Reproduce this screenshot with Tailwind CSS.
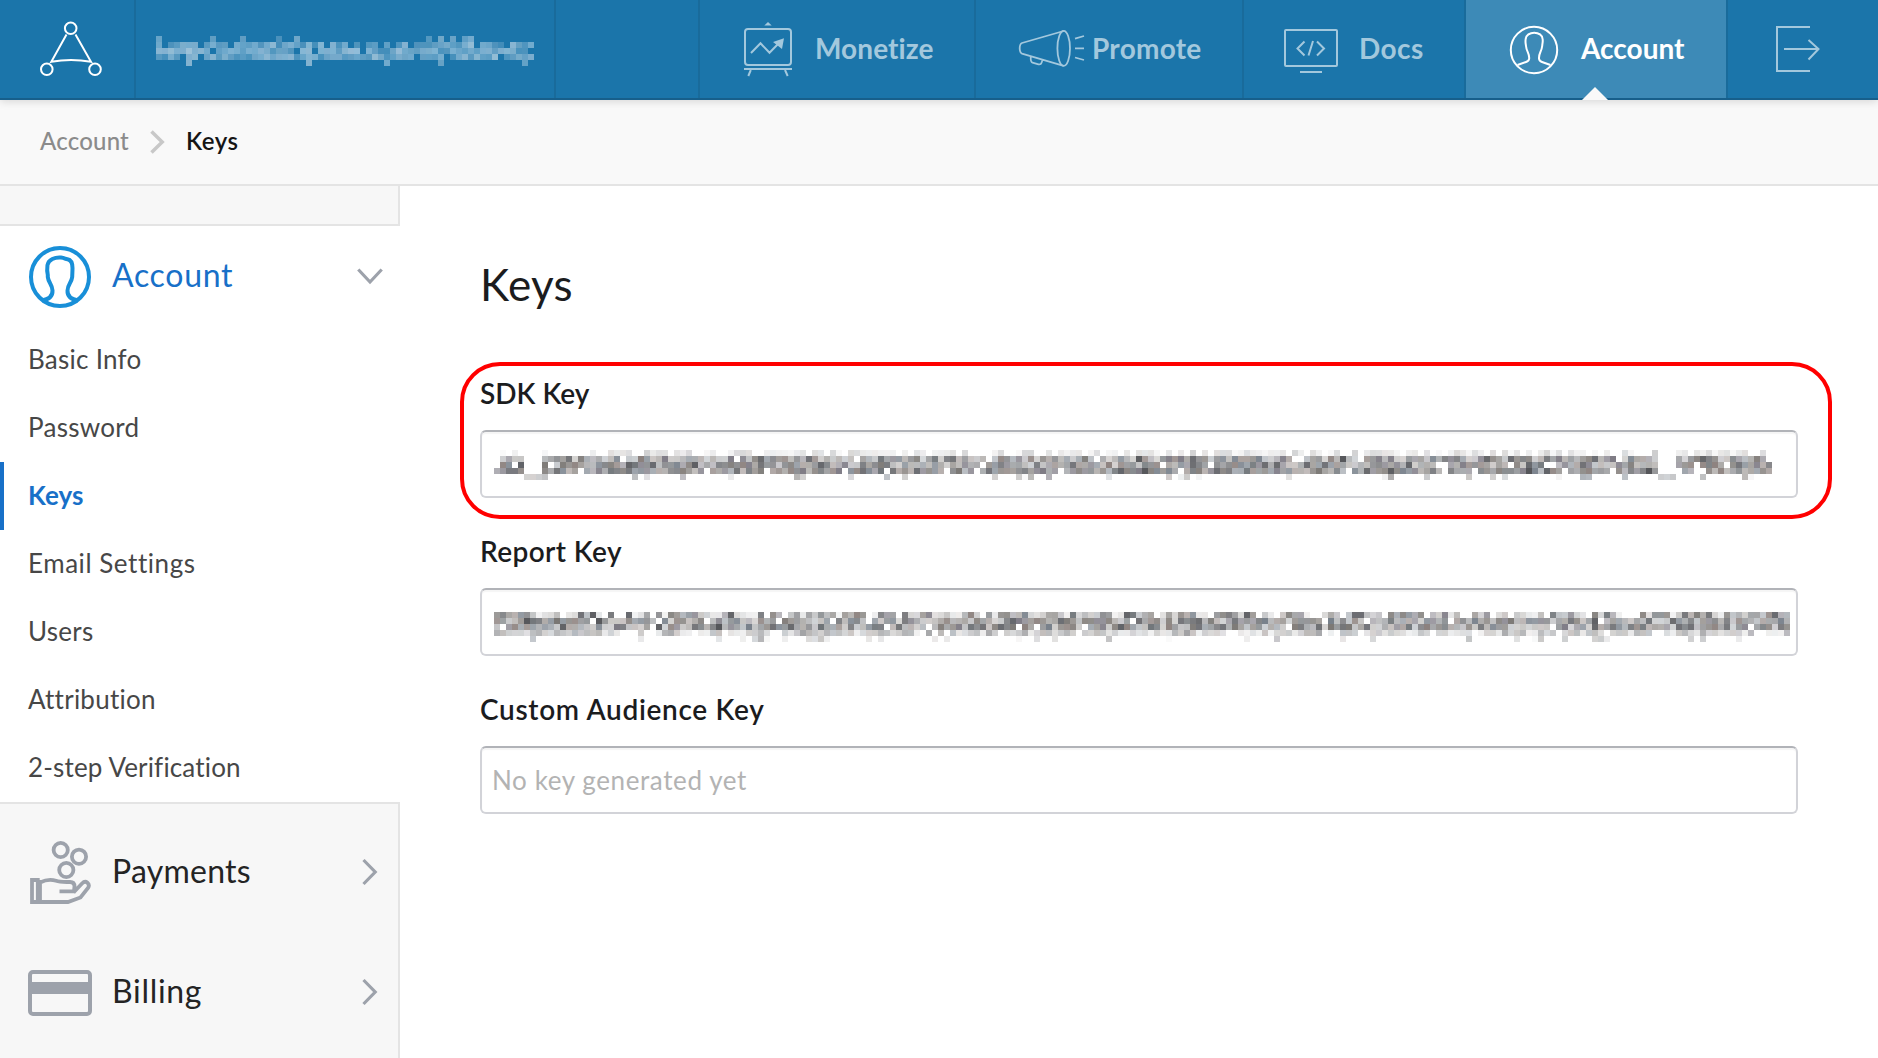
<!DOCTYPE html>
<html lang="en">
<head>
<meta charset="utf-8">
<title>Keys</title>
<script src="https://cdn.jsdelivr.net/npm/@tailwindcss/browser@4"></script>
</head>
<body class="flex h-[1058px] w-[1878px] flex-col overflow-hidden bg-white font-['Lato','Open_Sans',sans-serif] text-[#1b1c1e]">

<header class="relative z-10 flex h-[100px] shrink-0 border-b-2 border-[#175f8b] bg-[#1b75aa] text-[28px] font-bold text-[#a3c8dd] shadow-[0_2px_8px_rgba(0,0,0,0.13)]">
  <a class="w-[136px] border-r-2 border-[#196b9b] pl-[38px]">
    <svg class="h-[98px] w-[68px] text-white" viewBox="38 0 68 98" fill="none" stroke="currentColor" stroke-width="2">
      <circle cx="70.7" cy="28.3" r="5.8"/><circle cx="46.8" cy="69.3" r="5.8"/><circle cx="95" cy="69.3" r="5.8"/>
      <path d="M66.5 34.5L51.3 61.8Q71 58 91 61.8L75.5 34.5"/>
    </svg>
  </a>
  <div class="w-[420px] border-r-2 border-[#196b9b] pt-9 pl-5">
    <svg id="mask-email" class="h-[30px] w-[380px]" shape-rendering="crispEdges"></svg>
  </div>
  <div class="w-36 border-r-2 border-[#196b9b]"></div>
  <a class="flex w-[276px] items-center gap-[22px] border-r-2 border-[#196b9b] pl-[43px]">
    <svg class="h-[98px] w-[50px]" viewBox="743 0 50 98" fill="none" stroke="currentColor" stroke-width="2">
      <rect x="745" y="29" width="46" height="36" rx="3"/>
      <path d="M744 69H792M750.8 70L748.3 76M785 70L787.7 76M751 53L760.5 43.3L769.5 52.8L779 43"/>
      <path d="M764.3 25.5L768 22L771.7 25.5ZM784 38.2L773 42L782 49Z" fill="currentColor" stroke="none"/>
    </svg>
    <span class="pb-0.5 tracking-[0.09px]">Monetize</span>
  </a>
  <a class="flex w-[268px] items-center gap-1.5 border-r-2 border-[#196b9b] pl-[42px]">
    <svg class="h-[98px] w-[68px]" viewBox="1018 0 68 98" fill="none" stroke="currentColor" stroke-width="1.8">
      <ellipse cx="1063.7" cy="48.4" rx="6.3" ry="17.5"/>
      <path d="M1063.7 31L1022 43Q1019.7 44 1019.7 48.300T1022 53.600L1063.700 65.900M1030.800 56.600Q1030.300 62 1032.500 62.600L1038.500 64.300Q1041.800 65 1042.300 60M1075 38.600L1084 36M1075 48.300H1084M1075 57.500L1084 60"/>
    </svg>
    <span class="pb-0.5 tracking-[0.25px]">Promote</span>
  </a>
  <a class="flex w-[222px] items-center gap-5 border-r-2 border-[#196b9b] pl-[39px]">
    <svg class="h-[98px] w-14" viewBox="1283 0 56 98" fill="none" stroke="currentColor" stroke-width="2">
      <rect x="1285" y="30" width="52" height="36" rx="1"/>
      <path d="M1300 72H1322M1304.500 41.500L1297.500 48.500L1304.500 55.500M1317 41.500L1324 48.500L1317 55.500M1313 41L1308.500 55.500"/>
    </svg>
    <span class="pb-0.5 tracking-[0.44px]">Docs</span>
  </a>
  <a class="relative flex w-[262px] items-center gap-[22px] border-r-2 border-[#196b9b] bg-[#3d8ab7] pl-[43px] text-white">
    <svg class="h-[98px] w-[50px]" viewBox="1509 0 50 98" fill="none" stroke="currentColor" stroke-width="2">
      <circle cx="1534" cy="50" r="23.2"/>
      <path d="M1517.500 65L1526 62Q1529 61 1529.200 58.500C1529.500 53 1526.500 52 1526 46C1525.500 42 1525.300 43 1525.600 39.500C1526 30.500 1542.500 30.500 1542.700 39.500C1542.900 43 1542.500 42 1542.200 46C1541.500 52 1538.700 53 1539 58.500Q1539.200 61 1542 62L1550.500 65"/>
    </svg>
    <span class="pb-0.5">Account</span>
    <svg class="absolute -bottom-0.5 left-[116px] h-[13px] w-[26px]" viewBox="0 0 26 13"><path d="M0 13L13 0L26 13Z" fill="#f9f9f9"/></svg>
  </a>
  <a class="pl-[46px]">
    <svg class="h-[98px] w-[48px]" viewBox="1774 0 48 98" fill="none" stroke="currentColor" stroke-width="2">
      <path d="M1810 27H1777V71H1810M1784 49H1818.500M1808.500 40L1818.500 49L1808.500 59.500"/>
    </svg>
  </a>
</header>

<nav class="flex h-[86px] shrink-0 items-center border-b-2 border-[#e4e4e4] bg-[#f9f9f9] pl-10 text-2xl">
  <span class="pb-0.5 font-medium tracking-[0.2px] text-[#8b8b8b]">Account</span>
  <svg class="ml-[21px] h-6 w-4" viewBox="0 0 16 24" fill="none" stroke="#c8c8c8" stroke-width="3.500"><path d="M1.500 1.500L12.200 12L1.500 22.500"/></svg>
  <span class="ml-[20px] pb-0.5 font-semibold tracking-[0.5px] text-[#151515]">Keys</span>
</nav>

<div class="flex min-h-0 flex-1">
  <aside class="flex w-[400px] shrink-0 flex-col">
    <div class="h-10 shrink-0 border-r-2 border-b-2 border-[#e4e4e4] bg-[#f7f7f7]"></div>
    <div class="flex h-[100px] shrink-0 items-center pl-7 text-[32px] text-[#1870c8]">
      <svg class="mt-px h-16 w-16" viewBox="0 0 64 64" fill="none" stroke="#188fd8" stroke-width="4">
        <circle cx="32" cy="32" r="29"/>
        <path d="M14 55.500C20 54.500 24.800 51.500 24.500 45.500C24 39 20.500 38 19.800 32V30C18.700 26 19 24 19.500 20C20.500 14.500 27 12 33 12.500C37 13 37 14 39.500 14.200C44 15 44.500 19 44.500 23C44.500 27 44.300 28 44.200 32C43.500 38 39.800 39 39.500 45.500C39.200 51.500 44 54.500 50 55.500"/>
      </svg>
      <span class="ml-5 pb-[3px] tracking-[0.7px]">Account</span>
      <svg class="mr-4 mb-px ml-auto h-5 w-7" viewBox="0 0 28 20" fill="none" stroke="#9da2ab" stroke-width="3.200"><path d="M2.300 3.500L14 16L25.700 3.500"/></svg>
    </div>
    <ul class="shrink-0 text-[26px] leading-[66px] text-[#474747]">
      <li class="h-[68px] pl-7 tracking-[0.26px]">Basic Info</li>
      <li class="h-[68px] pl-7 tracking-[0.28px]">Password</li>
      <li class="h-[68px] border-l-4 border-[#1870c8] pl-6 font-bold tracking-[0.06px] text-[#1870c8]">Keys</li>
      <li class="h-[68px] pl-7 tracking-[0.55px]">Email Settings</li>
      <li class="h-[68px] pl-7 tracking-[0.28px]">Users</li>
      <li class="h-[68px] pl-7 tracking-[0.24px]">Attribution</li>
      <li class="h-[68px] pl-7 tracking-[0.16px]">2-step Verification</li>
    </ul>
    <div class="flex-1 border-t-2 border-r-2 border-[#e4e4e4] bg-[#f7f7f7] pt-2 text-[32px] text-[#242424]">
      <div class="flex h-[120px] items-center pl-7">
        <svg class="h-[66px] w-16" viewBox="0 0 64 66" fill="none" stroke="#9da2ab" stroke-width="3.800">
          <circle cx="32.700" cy="11" r="7.100"/><circle cx="51" cy="17.700" r="7.100"/><circle cx="38.300" cy="31" r="7.100"/>
          <path d="M4 41H9.800V63H4ZM12 41V63M12 43.500C17 41 23 40 28 41.800C32 43.300 36 43 42 43Q46.500 43 46.500 47.500L46 52.300H31.500M45.500 53.500L54 44.500C58 40.500 62.500 45 60 49L52.500 58.500L40 63H9"/>
        </svg>
        <span class="ml-5 pb-[3px] tracking-[0.25px]">Payments</span>
        <svg class="mr-5 ml-auto h-7 w-4" viewBox="0 0 16 28" fill="none" stroke="#9da2ab" stroke-width="3.200"><path d="M1.500 2L13.200 14L1.500 26"/></svg>
      </div>
      <div class="flex h-[120px] items-center pl-7">
        <svg class="mt-0.5 h-[46px] w-16" viewBox="0 0 64 46" fill="none" stroke="#9da2ab" stroke-width="4">
          <rect x="2" y="2" width="60" height="42" rx="3"/><path d="M2 18H62" stroke-width="12"/>
        </svg>
        <span class="ml-5 pb-[3px] tracking-[0.7px]">Billing</span>
        <svg class="mr-5 ml-auto h-7 w-4" viewBox="0 0 16 28" fill="none" stroke="#9da2ab" stroke-width="3.200"><path d="M1.500 2L13.200 14L1.500 26"/></svg>
      </div>
    </div>
  </aside>

  <main class="flex-1 pt-[72px] pr-20 pl-20 text-[28px] font-semibold leading-[37px]">
    <h1 class="mb-[65px] text-[44px] leading-[52px] font-normal tracking-[0.4px]">Keys</h1>
    <section class="relative h-[158px]">
      <h2 class="mb-[18px]">SDK Key</h2>
      <div class="h-[68px] rounded-md border-2 border-[#d2d3d8] border-t-[#b1b3b8] pt-[18px] pl-3 shadow-[inset_0_2px_1px_rgba(0,0,0,0.04)]">
        <svg id="mask-sdk" class="h-[30px] w-[1278px]" shape-rendering="crispEdges"></svg>
      </div>
      <div class="absolute -top-[13px] -left-5 h-[157px] w-[1372px] rounded-[40px] border-4 border-[#ff0000]"></div>
    </section>
    <section class="h-[158px]">
      <h2 class="mb-[18px] tracking-[0.4px]">Report Key</h2>
      <div class="h-[68px] rounded-md border-2 border-[#d2d3d8] border-t-[#b1b3b8] pt-[22px] pl-3 shadow-[inset_0_2px_1px_rgba(0,0,0,0.04)]">
        <svg id="mask-report" class="h-[30px] w-[1296px]" shape-rendering="crispEdges"></svg>
      </div>
    </section>
    <section class="h-[158px]">
      <h2 class="mb-[18px] tracking-[0.68px]">Custom Audience Key</h2>
      <div class="h-[68px] rounded-md border-2 border-[#d2d3d8] border-t-[#b1b3b8] pl-2.5 text-[26px] leading-[65px] font-normal tracking-[0.6px] text-[#b3b3b3] shadow-[inset_0_2px_1px_rgba(0,0,0,0.04)]">No key generated yet</div>
    </section>
  </main>
</div>

<script>
// Private values are hidden behind a mosaic of 6px cells.
function mosaic(id, cols, rows, palette, seed, gaps) {
  let s = seed;
  const rnd = () => (s = (s * 16807) % 2147483647) / 2147483647;
  let out = '';
  for (let x = 0; x < cols; x++) {
    const gap = gaps.some(([a, b]) => x >= a && x <= b);
    rows.forEach(([fill, low, high], y) => {
      const hit = rnd(), level = rnd(), tone = palette[Math.floor(rnd() * palette.length)];
      if (gap ? y !== rows.length - 1 : hit > fill) return;
      const alpha = gap ? 0.35 : low + (high - low) * level;
      out += `<rect x="${x * 6}" y="${y * 6}" width="6" height="6" fill="${tone}" fill-opacity="${alpha.toFixed(2)}"/>`;
    });
  }
  document.getElementById(id).innerHTML = out;
}
const greys = ['#6f7478', '#7a7774', '#5f6166', '#85807c', '#77808a', '#8a7f7c', '#55565a', '#7d7a84'];
const blues = ['#b3cfe0', '#9fc6de', '#a9c8de', '#8fbdd9'];
mosaic('mask-email', 63, [[0.12, 0.3, 0.7], [0.75, 0.3, 0.8], [0.9, 0.35, 0.9], [0.92, 0.35, 0.8], [0.07, 0.4, 0.8]], blues, 4217, []);
mosaic('mask-sdk', 213, [[0.6, 0.04, 0.3], [0.95, 0.3, 1], [0.93, 0.35, 1], [0.93, 0.5, 1], [0.13, 0.04, 0.6]], greys, 90871, [[5, 7], [194, 196]]);
mosaic('mask-report', 216, [[0.85, 0.08, 0.95], [0.96, 0.3, 1], [0.95, 0.3, 1], [0.88, 0.1, 0.55], [0.12, 0.04, 0.45]], greys, 55123, []);
</script>
</body>
</html>
